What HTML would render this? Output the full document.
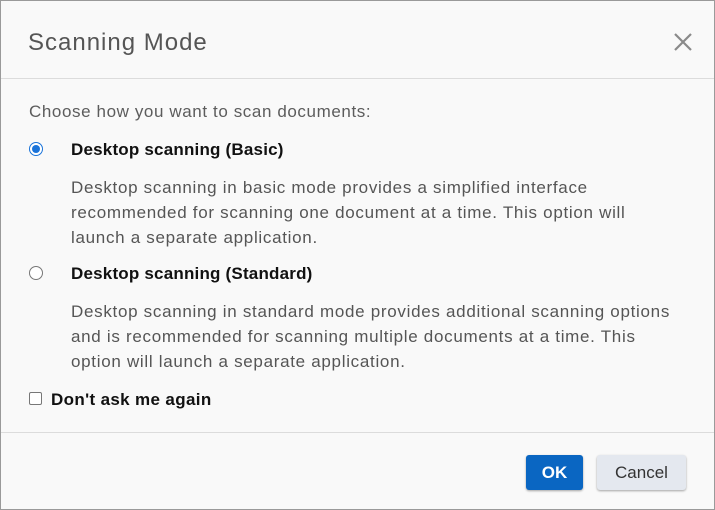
<!DOCTYPE html>
<html><head><style>
body{margin:0;width:715px;height:510px;overflow:hidden;background:#fff;font-family:"Liberation Sans",Arial,sans-serif}
.d{position:absolute;left:0;top:0;width:713px;height:508px;border:1px solid #9a9a9a;background:#f9f9f9}
.t{position:absolute;white-space:nowrap}
.title{left:27px;top:28px;font-size:24px;color:#555;letter-spacing:1px}
.hl{position:absolute;left:0;width:713px;height:1px;background:#dcdcdc}
.g{color:#5c5c5c;font-size:17px;letter-spacing:0.6px}
.b{color:#111;font-size:17px;font-weight:bold;letter-spacing:0.2px}
.p{color:#555;font-size:17px;letter-spacing:0.7px}
.radio{position:absolute;width:12px;height:12px;border-radius:50%;border:1px solid #777;background:#fff}
.btn{position:absolute;border-radius:3px;font-size:17px;text-align:center;line-height:35px;box-shadow:0 1px 2px rgba(0,0,0,.35)}
</style></head><body>
<div class="d">
<div class="t title">Scanning Mode</div>
<svg style="position:absolute;left:672px;top:31px" width="20" height="20"><path d="M2 2L18 18M18 2L2 18" stroke="#8a8a8a" stroke-width="2.2"/></svg>
<div class="hl" style="top:77px"></div>
<div class="t g" style="left:28px;top:101px">Choose how you want to scan documents:</div>
<div class="radio" style="left:28px;top:141px;border-color:#1a73d9;"><div style="position:absolute;left:2px;top:2px;width:8px;height:8px;border-radius:50%;background:#1a73d9"></div></div>
<div class="t b" style="left:70px;top:139px">Desktop scanning (Basic)</div>
<div class="t p" style="left:70px;top:177px">Desktop scanning in basic mode provides a simplified interface</div>
<div class="t p" style="left:70px;top:202px">recommended for scanning one document at a time. This option will</div>
<div class="t p" style="left:70px;top:227px">launch a separate application.</div>
<div class="radio" style="left:28px;top:265px"></div>
<div class="t b" style="left:70px;top:263px">Desktop scanning (Standard)</div>
<div class="t p" style="left:70px;top:301px">Desktop scanning in standard mode provides additional scanning options</div>
<div class="t p" style="left:70px;top:326px">and is recommended for scanning multiple documents at a time. This</div>
<div class="t p" style="left:70px;top:351px">option will launch a separate application.</div>
<div style="position:absolute;left:28px;top:391px;width:11px;height:11px;border:1px solid #777;border-radius:2px;background:#fff"></div>
<div class="t b" style="left:50px;top:389px;letter-spacing:0.35px">Don't ask me again</div>
<div class="hl" style="top:431px"></div>
<div class="btn" style="left:525px;top:454px;width:57px;height:35px;background:#0a66c2;color:#fff;font-weight:bold">OK</div>
<div class="btn" style="left:596px;top:454px;width:89px;height:35px;background:#e4e8ef;color:#333">Cancel</div>
</div>
</body></html>
